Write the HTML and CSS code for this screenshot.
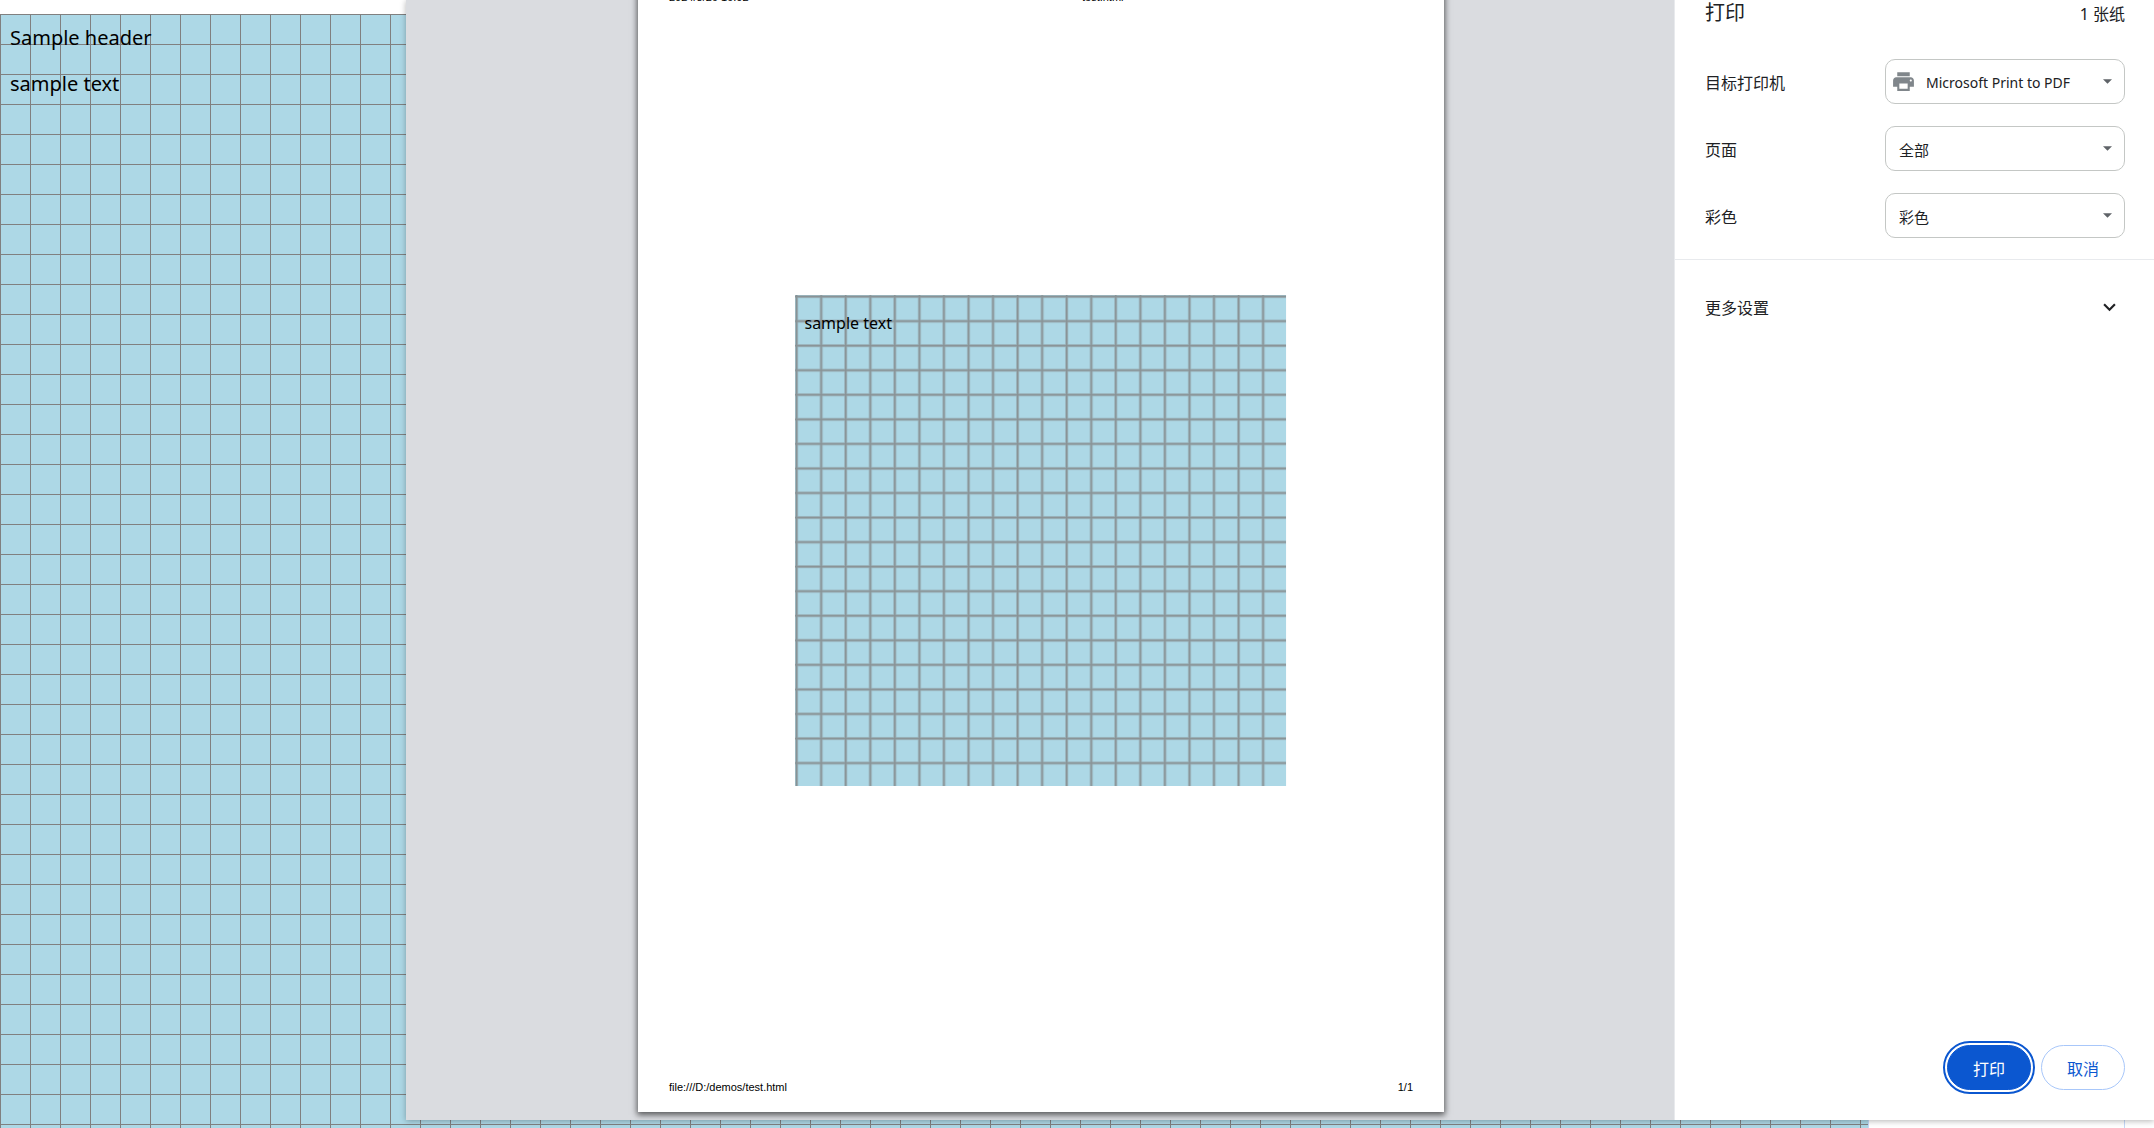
FILE: index.html
```html
<!DOCTYPE html>
<html lang="zh-CN">
<head>
<meta charset="utf-8">
<title>打印</title>
<link rel="stylesheet" href="styles.css">
</head>
<body>
<div class="document">
  <main class="canvas">
    <p class="canvas-text">Sample header</p>
    <p class="canvas-text">sample text</p>
  </main>
  <div class="rail"></div>
</div>

<div class="dialog" role="dialog" aria-labelledby="print-title">
  <section class="preview" aria-label="打印预览">
    <article class="paper">
      <header class="paper-line">
        <span>2024/8/26 16:02</span>
        <span class="paper-title">test.html</span>
      </header>
      <div class="paper-content">
        <svg class="paper-grid" viewBox="0 0 600 600" aria-hidden="true">
          <defs>
            <pattern id="cell" width="30" height="30" patternUnits="userSpaceOnUse">
              <path d="M0 2H30M2 0V30" fill="none" stroke="#808080" stroke-opacity=".3" stroke-width="4"/>
              <path d="M0 2H30M2 0V30" fill="none" stroke="#808080" stroke-opacity=".7" stroke-width="2"/>
            </pattern>
          </defs>
          <rect width="600" height="600" fill="#add8e6"/>
          <rect width="600" height="600" fill="url(#cell)"/>
        </svg>
        <p class="paper-text">sample text</p>
      </div>
      <footer class="paper-line">
        <span>file:///D:/demos/test.html</span>
        <span>1/1</span>
      </footer>
    </article>
  </section>

  <form class="sidebar">
    <header class="sidebar-header">
      <h1 class="title" id="print-title">打印</h1>
      <span class="sheets">1 张纸</span>
    </header>
    <div class="settings">
      <div class="row">
        <label for="destination">目标打印机</label>
        <div class="field field-icon">
          <select id="destination"><option>Microsoft Print to PDF</option></select>
          <svg class="printer" viewBox="0 0 24 24" aria-hidden="true"><path fill="#80868b" d="M19 8H5c-1.660 0-3 1.340-3 3v6h4v4h12v-4h4v-6c0-1.660-1.340-3-3-3zm-3 11H8v-5h8v5zm3-7c-.55 0-1-.45-1-1s.45-1 1-1 1 .45 1 1-.45 1-1 1zm-1-9H6v4h12V3z"/></svg>
          <svg class="arrow" viewBox="0 0 8 4" aria-hidden="true"><path d="M0 0h8L4 4z"/></svg>
        </div>
      </div>
      <div class="row">
        <label for="pages">页面</label>
        <div class="field">
          <select id="pages"><option>全部</option></select>
          <svg class="arrow" viewBox="0 0 8 4" aria-hidden="true"><path d="M0 0h8L4 4z"/></svg>
        </div>
      </div>
      <div class="row">
        <label for="color">彩色</label>
        <div class="field">
          <select id="color"><option>彩色</option></select>
          <svg class="arrow" viewBox="0 0 8 4" aria-hidden="true"><path d="M0 0h8L4 4z"/></svg>
        </div>
      </div>
    </div>
    <button class="more" type="button" aria-expanded="false">
      <span>更多设置</span>
      <svg class="chevron" viewBox="0 0 12 8" aria-hidden="true"><path d="M1 1l5 5 5-5"/></svg>
    </button>
    <footer class="actions">
      <button class="button primary" type="submit">打印</button>
      <button class="button" type="button">取消</button>
    </footer>
  </form>
</div>
</body>
</html>
```
FILE: styles.css
```css
* {
  box-sizing: border-box;
}

body {
  margin: 0;
  height: 100vh;
  overflow: hidden;
  position: relative;
  background: #fff;
  color: #000;
  font-family: "Noto Sans", "Noto Sans CJK SC", sans-serif;
}

p,
h1 {
  margin: 0;
  font-weight: 400;
}

/* Page behind the dialog */
.document {
  display: flex;
  height: 100%;
  padding-top: 14px;
}

.canvas {
  flex: 1;
  display: flex;
  flex-direction: column;
  gap: 18px;
  padding: 10px;
  background-color: #add8e6;
  background-image:
    linear-gradient(#808080 1px, transparent 1px),
    linear-gradient(90deg, #808080 1px, transparent 1px);
  background-size: 30px 30px;
}

.canvas-text {
  font-size: 20px;
  line-height: 28px;
}

.rail {
  width: 257px;
  margin-right: 29px;
  border: solid #c5d9f9;
  border-width: 0 1px;
}

/* Print dialog */
.dialog {
  position: absolute;
  inset: 0 0 8px 406px;
  display: flex;
  background: #fff;
  box-shadow: 0 1px 6px rgba(0, 0, 0, 0.3);
}

.preview {
  flex: 1;
  display: flex;
  flex-direction: column;
  justify-content: flex-end;
  align-items: center;
  padding: 0 230px 8px 232px;
  overflow: hidden;
  background: #dadce0;
  border-right: 1px solid #e8eaed;
}

.paper {
  flex: none;
  width: 100%;
  aspect-ratio: 210 / 297;
  display: flex;
  flex-direction: column;
  justify-content: space-between;
  align-items: center;
  padding: 18px 31px;
  background: #fff;
  box-shadow: 0 2px 6px 1px rgba(0, 0, 0, 0.6);
}

.paper-line {
  display: flex;
  justify-content: space-between;
  align-self: stretch;
  font: 11px/14px "Liberation Sans", Arial, sans-serif;
}

.paper-title {
  flex: 1;
  padding-left: 44px;
  text-align: center;
}

.paper-content {
  display: grid;
  width: 66%;
  margin-bottom: 4px;
}

.paper-grid,
.paper-text {
  grid-area: 1 / 1;
}

.paper-grid {
  display: block;
  width: 100%;
}

.paper-text {
  padding: 16px 9px;
  font-size: 16px;
  line-height: 24px;
}

/* Settings column */
.sidebar {
  width: 479px;
  display: flex;
  flex-direction: column;
  color: #202124;
  font-size: 16px;
}

.sidebar-header {
  display: flex;
  justify-content: space-between;
  align-items: center;
  height: 26px;
  padding: 0 29px 0 30px;
}

.title {
  font-size: 20px;
  line-height: 26px;
}

.settings {
  display: flex;
  flex-direction: column;
  gap: 22px;
  padding: 33px 29px 21px 30px;
  border-bottom: 1px solid #e8eaed;
}

.row {
  display: flex;
  justify-content: space-between;
  align-items: center;
}

.field {
  position: relative;
  width: 240px;
}

.field select {
  appearance: none;
  display: block;
  width: 100%;
  height: 45px;
  padding: 2px 32px 0 13px;
  border: 1px solid #c4c7c5;
  border-radius: 10px;
  background: #fff;
  color: #202124;
  font: inherit;
  font-size: 15px;
}

.field-icon select {
  padding-left: 40px;
  font-size: 14px;
}

.printer {
  position: absolute;
  left: 6px;
  top: 10px;
  width: 25px;
  height: 25px;
}

.arrow {
  position: absolute;
  right: 13px;
  top: 20px;
  width: 9px;
  height: 5px;
  fill: #5f6368;
}

.more {
  display: flex;
  justify-content: space-between;
  align-items: center;
  height: 94px;
  padding: 0 38px 0 30px;
  border: 0;
  background: none;
  color: inherit;
  font: inherit;
}

.chevron {
  width: 13px;
  height: 9px;
  fill: none;
  stroke: #202124;
  stroke-width: 2;
}

.actions {
  display: flex;
  justify-content: flex-end;
  gap: 10px;
  margin-top: auto;
  padding: 30px 29px;
}

.button {
  width: 84px;
  height: 45px;
  padding: 0;
  border: 1px solid #a8c7fa;
  border-radius: 23px;
  background: #fff;
  color: #0b57d0;
  font: inherit;
}

.primary {
  border-color: #0b57d0;
  background: #0b57d0;
  color: #fff;
  outline: 2px solid #0b57d0;
  outline-offset: 2px;
}
```
